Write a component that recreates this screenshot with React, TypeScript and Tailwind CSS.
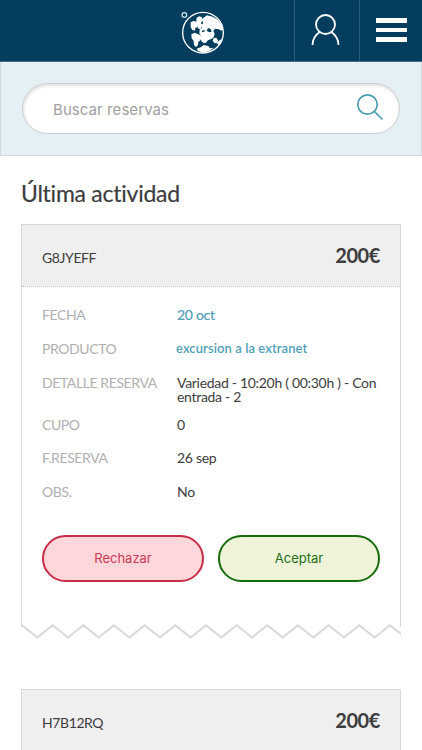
import { ReactNode } from "react";
import clsx from "clsx";

type Row = { label: string; value: string; className: string; valueClass?: string };

const rows: Row[] = [
  { label: "FECHA", value: "20 oct", className: "h-[34px]", valueClass: "text-[#4f9fb8] [-webkit-text-stroke:0.2px]" },
  { label: "PRODUCTO", value: "excursion a la extranet", className: "h-[34px]", valueClass: "text-[#4f9fb8] text-[13px] font-semibold tracking-[0.09px] -ml-px -mt-px" },
  { label: "DETALLE RESERVA", value: "Variedad - 10:20h ( 00:30h ) - Con entrada - 2", className: "h-[42px]" },
  { label: "CUPO", value: "0", className: "h-[33px]" },
  { label: "F.RESERVA", value: "26 sep", className: "h-[34px]" },
  { label: "OBS.", value: "No", className: "h-[50px]" },
];

function Logo() {
  return (
    <svg width="46" height="46" viewBox="33 33 138 138" fill="none">
      <circle cx="99" cy="98" r="61" stroke="white" strokeWidth="4" />
      <circle cx="43" cy="45" r="7" stroke="#dce9f0" strokeWidth="3.5" />
      <g fill="white">
        <path d="M62 67l8-4 10 2 5 7-2 9-7 3-1 8-8-2-5-8zM80 53l8-4 8 3 1 10-4 7 4 8-5 11-9-3 2-12-6-9z" />
        <path d="M64 103l10-5 9 4 8 3 4 7-4 9-6 5-1 9-6 6-6-6-1-12-6-8z" />
        <path d="M99 55l12-9 17 4 15 9 10 13 6 17-4 3-9-4-11-2-5 6 4 10-4 11-8 5-8 3-7 8-8-1-7-8 1-13-5-8 1-10 8-6-5-8 7-4-1-7-7-2z" />
        <path d="M131 114l8-1 5 8-2 9-9-1-5-7zM147 122l9-6-4 15-8 5-2-8zM80 146l12-4 9-7 14 3 5 7 11-2-12 10-18 5-17-5z" />
      </g>
      <path d="M114 84l8 3 3 8-7 2-8-5zM95 92l8-2 2 4-8 3z" fill="#043d5d" />
    </svg>
  );
}

function CardHeader({ code, price }: { code: string; price: string }) {
  return (
    <div className="flex h-[61px] justify-between bg-[#efefef] px-5">
      <span className="pt-[23px] text-[14px] leading-[20px] tracking-[-0.4px]">{code}</span>
      <span className="pt-[17px] text-[20px] leading-[26px] font-bold tracking-[-0.4px]">{price}</span>
    </div>
  );
}

function ActionButton({ className, children }: { className: string; children: ReactNode }) {
  return (
    <button
      className={clsx(
        "h-[47px] w-[162px] rounded-full border-2 font-['Inter',sans-serif] text-[13px]",
        className
      )}
    >
      {children}
    </button>
  );
}

function TornEdge() {
  // one tooth every 30.67px, starting at the left border
  const points = Array.from({ length: 26 }, (_, i) => `${1 + i * 15.33},${i % 2 ? 13.5 : 1.2}`).join(" ");
  return (
    <svg width="380" height="16" viewBox="0 0 380 16" fill="none" className="-mt-[3px] block">
      <polyline points={points} stroke="#d9d9d9" strokeWidth="2" />
    </svg>
  );
}

export default function App() {
  return (
    <div className="h-[750px] overflow-hidden bg-white font-['Lato',sans-serif] text-[#3d3d3d]">
      <header className="flex h-[62px] border-b border-[#426c87] bg-[#043d5d]">
        <div className="w-[181px]" />
        <div className="flex flex-1 pt-[11px]">
          <Logo />
        </div>
        <button className="flex w-[65px] justify-center border-l border-[#2c5c79] pt-[13px]" aria-label="Perfil">
          <svg width="32" height="34" viewBox="0 0 32 34" fill="none" stroke="white" strokeWidth="1.8">
            <circle cx="14.5" cy="11.5" r="9.5" />
            <path d="M1.5 32c0-5.5 2.8-10 7.2-13M27.5 32c0-5.5-2.8-10-7.2-13" />
          </svg>
        </button>
        <button className="flex w-[63px] flex-col items-center gap-[5px] border-l border-[#2c5c79] pt-[18px]" aria-label="Menú">
          <span className="h-[4.5px] w-[31px] bg-white" />
          <span className="h-[4.5px] w-[31px] bg-white" />
          <span className="h-[4.5px] w-[31px] bg-white" />
        </button>
      </header>

      <div className="h-[94px] border border-t-0 border-[#d3d8da] bg-[#e5f0f5] px-[21px] pt-[21px]">
        <label className="flex h-[51px] items-center rounded-full border border-[#cccccc] bg-white pr-[15px] pl-[30px] shadow-[inset_1px_2px_3px_rgba(0,0,0,0.12)]">
          <input
            type="text"
            placeholder="Buscar reservas"
            className="min-w-0 flex-1 pt-[3px] font-['Inter',sans-serif] text-[15px] tracking-[0.07px] outline-none placeholder:text-[#a0a0a0]"
          />
          <svg width="28" height="28" viewBox="0 0 28 28" fill="none" stroke="#4c9eb2" strokeWidth="1.7" className="-mt-1">
            <circle cx="11.5" cy="11.5" r="9.7" />
            <path d="M18.3 18.3l8.2 8.2" />
          </svg>
        </label>
      </div>

      <main className="px-[21px] pt-[22px]">
        <h1 className="h-[46px] text-[23px] leading-[30px] tracking-[-0.25px] [-webkit-text-stroke:0.2px]">Última actividad</h1>

        <section>
          <div className="h-[403px] border-x border-t border-[#d9d9d9]">
            <CardHeader code="G8JYEFF" price="200€" />
            <div className="border-t border-dotted border-[#c4c4c4] px-5 pt-[20.5px] text-[14px] leading-[14px] tracking-[-0.3px]">
              {rows.map((row) => (
                <div key={row.label} className={clsx("flex", row.className)}>
                  <span className="w-[135px] shrink-0 tracking-[-0.4px] text-[#b0b0b0]">{row.label}</span>
                  <span className={clsx("flex-1", row.valueClass)}>{row.value}</span>
                </div>
              ))}
              <div className="flex justify-between tracking-normal">
                <ActionButton className="border-[#c72d48] bg-[#ffd6da] text-[#c93a55]">Rechazar</ActionButton>
                <ActionButton className="border-[#176b0b] bg-[#eef3da] text-[#226f18]">Aceptar</ActionButton>
              </div>
            </div>
          </div>
          <TornEdge />
        </section>

        <section className="mt-[48.5px] border-x border-t border-[#d9d9d9]">
          <CardHeader code="H7B12RQ" price="200€" />
        </section>
      </main>
    </div>
  );
}
